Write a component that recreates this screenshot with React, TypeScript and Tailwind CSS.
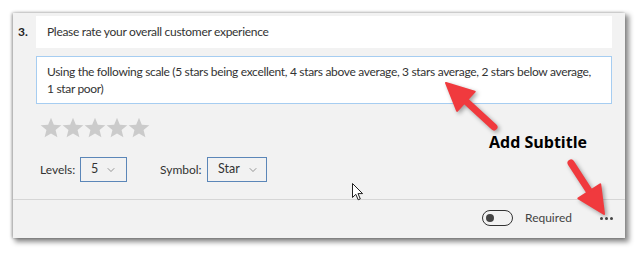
import { ChevronDown } from 'lucide-react';

// Star rating question card, with the "Add Subtitle" call-out drawn over it

const font = { fontFamily: 'Lato, "Noto Sans", Arial, sans-serif' };

function Star() {
  return (
    <svg width="22" height="21" viewBox="0 0 24 23">
      <path
        d="M12 0.8l3.1 7.6 8.2 0.6-6.3 5.3 2 8-7-4.3-7 4.3 2-8L0.7 9l8.2-0.6z"
        fill="#cbcbcb"
      />
    </svg>
  );
}

function Dropdown({ value, width }: { value: string; width: string }) {
  return (
    <div
      className={`${width} h-[25px] border border-[#5b86b8] flex items-center pl-[10px] gap-[7px] text-[12.5px] text-[#333]`}
    >
      <span>{value}</span>
      <ChevronDown size={12} strokeWidth={1.2} className="text-[#555]" />
    </div>
  );
}

function Arrow({ x1, y1, x2, y2 }: { x1: number; y1: number; x2: number; y2: number }) {
  // shaft from tail (x1,y1) toward the tip (x2,y2), head as a triangle
  const dx = x2 - x1;
  const dy = y2 - y1;
  const len = Math.hypot(dx, dy);
  const ux = dx / len;
  const uy = dy / len;
  const headLen = 27;
  const headHalf = 13;
  const bx = x2 - ux * headLen;
  const by = y2 - uy * headLen;
  const p1 = `${x2},${y2}`;
  const p2 = `${bx - uy * headHalf},${by + ux * headHalf}`;
  const p3 = `${bx + uy * headHalf},${by - ux * headHalf}`;
  return (
    <g>
      <line x1={x1} y1={y1} x2={bx + ux * 4} y2={by + uy * 4} stroke="#f03a3e" strokeWidth="7" strokeLinecap="round" />
      <polygon points={`${p1} ${p2} ${p3}`} fill="#f03a3e" strokeLinejoin="round" stroke="#f03a3e" strokeWidth="2" />
    </g>
  );
}

export default function App() {
  return (
    <div className="relative w-[644px] h-[253px] bg-white overflow-hidden" style={font}>
      <div className="pt-[13px] pl-[13px]">
        <div className="w-[612px] h-[225px] bg-[#f2f2f2] shadow-[3px_3px_5px_1px_rgba(0,0,0,0.45),-1px_0_3px_rgba(0,0,0,0.35)] flex flex-col">
          <div className="flex pt-[3px]">
            <div className="w-[23px] shrink-0 pl-[5px] pt-[10px] text-[12px] font-bold text-[#222] leading-none">3.</div>
            <div className="w-[576px] shrink-0 flex flex-col">
              <div className="h-[32px] bg-white flex items-center pl-[11px] text-[12px] tracking-[-0.3px] text-[#333]">
                Please rate your overall customer experience
              </div>
              <div className="mt-[8px] h-[48px] bg-white border border-[#a6cdf1] pl-[10px] pt-[6px] text-[12px] tracking-[-0.32px] leading-[17px] text-[#333] whitespace-nowrap overflow-hidden">
                Using the following scale (5 stars being excellent, 4 stars above average, 3 stars average, 2 stars below average,
                <br />
                1 star poor)
              </div>
              <div className="mt-[13px] ml-[4px] flex">
                <Star />
                <Star />
                <Star />
                <Star />
                <Star />
              </div>
              <div className="mt-[19px] ml-[4px] flex items-center text-[12px] text-[#333]">
                <span className="w-[40px]">Levels:</span>
                <Dropdown value="5" width="w-[47px]" />
                <span className="ml-[33px] w-[47px]">Symbol:</span>
                <Dropdown value="Star" width="w-[60px]" />
              </div>
            </div>
          </div>
          <div className="mt-auto h-[39px] border-t border-[#d6d6d6] flex items-center justify-end pr-[12px] pb-[2px]">
            <div className="w-[31px] h-[16px] rounded-full border-[1.5px] border-[#333] flex items-center pl-[3px]">
              <div className="w-[8px] h-[8px] rounded-full bg-[#444]" />
            </div>
            <span className="ml-[12px] w-[44px] text-[12px] text-[#444]">Required</span>
            <div className="ml-[31px] flex gap-[2px]">
              <div className="w-[3px] h-[3px] rounded-full bg-[#444]" />
              <div className="w-[3px] h-[3px] rounded-full bg-[#444]" />
              <div className="w-[3px] h-[3px] rounded-full bg-[#444]" />
            </div>
          </div>
        </div>
      </div>

      {/* annotation text */}
      <div
        className="absolute left-[489px] top-[134px] text-[16px] font-bold text-black leading-none"
        style={{ fontFamily: '"Open Sans", "Noto Sans", Arial, sans-serif' }}
      >
        Add Subtitle
      </div>

      {/* mouse cursor */}
      <svg className="absolute left-[352px] top-[183px]" width="12" height="18" viewBox="0 0 12 18">
        <path d="M0.5 0.5 L0.5 14.5 L3.8 11.3 L6.2 16.8 L8.3 15.9 L6 10.6 L10.6 10.6 Z" fill="white" stroke="#222" strokeWidth="1" strokeLinejoin="round" />
      </svg>

      {/* red call-out arrows */}
      <svg className="absolute inset-0" width="644" height="253" style={{ filter: 'drop-shadow(2px 2px 2px rgba(0,0,0,0.35))' }}>
        <Arrow x1={494} y1={127} x2={446} y2={83} />
        <Arrow x1={571} y1={163} x2={604} y2={214} />
      </svg>
    </div>
  );
}
